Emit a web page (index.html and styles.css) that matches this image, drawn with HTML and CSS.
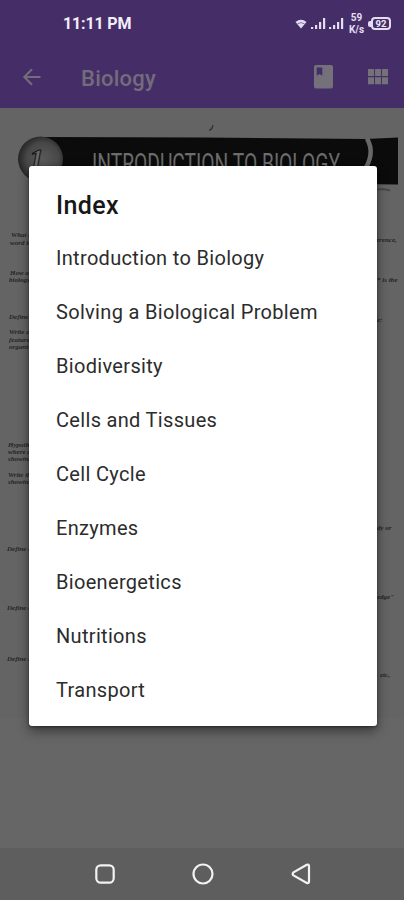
FILE: index.html
```html
<!DOCTYPE html>
<html lang="en">
<head>
<meta charset="utf-8">
<meta name="viewport" content="width=device-width, initial-scale=1">
<title>Biology</title>
<link rel="stylesheet" href="styles.css">
</head>
<body>
<div class="phone">
  <header class="top">
    <div class="status">
      <span class="time">11:11 PM</span>
      <div class="indicators">
        <svg class="wifi" width="12" height="10" viewBox="0 0 12 10"><path d="M.5 3Q6-1.400 11.500 3L6 9.500Z" fill="#e6dcf2"/><path d="M2.500 4.800Q6 2.400 9.500 4.800" fill="none" stroke="#6d5890" stroke-width=".8"/></svg>
        <svg class="signal" width="15" height="12" viewBox="0 0 15 12"><path d="M0 9h2.200v2H0zM4 7h2.200v4H4zM8 4h2.200v7H8zM12 0h2.200v11H12z" fill="#e6dcf2"/></svg>
        <svg class="signal" width="15" height="12" viewBox="0 0 15 12"><path d="M0 9h2.200v2H0zM4 7h2.200v4H4zM8 4h2.200v7H8zM12 0h2.200v11H12z" fill="#e6dcf2"/></svg>
        <span class="speed"><span>59</span><span>K/s</span></span>
        <span class="battery"><span class="level">92</span></span>
      </div>
    </div>
    <div class="appbar">
      <svg class="back" width="20" height="18" viewBox="0 0 20 18"><path d="M18.500 9H2.500M10 1.300 2.300 9l7.700 7.700" fill="none" stroke="#736c7a" stroke-width="2.100"/></svg>
      <h1>Biology</h1>
      <svg class="book" width="20" height="24" viewBox="0 0 20 24"><path fill-rule="evenodd" d="M2 0h15a2 2 0 0 1 2 2v19.500a2 2 0 0 1-2 2H2a2 2 0 0 1-2-2V2a2 2 0 0 1 2-2zM2.700 2.500v8.200l2.800-1.800 2.800 1.800V2.500z" fill="#74717a"/></svg>
      <svg class="grid" width="20" height="16" viewBox="0 0 20 16"><path d="M0 0h6v7H0zM7 0h6v7H7zM14 0h6v7h-6zM0 8.200h6v7H0zM7 8.200h6v7H7zM14 8.200h6v7h-6z" fill="#74717a"/></svg>
    </div>
  </header>
  <main class="viewer">
    <svg class="scan" width="404" height="610" viewBox="0 108 404 610">
      <defs>
        <radialGradient id="ball" cx=".55" cy=".5" r=".55"><stop offset="0" stop-color="#5a5a5a"/><stop offset=".65" stop-color="#474747"/><stop offset="1" stop-color="#252525"/></radialGradient>
      </defs>
      <rect y="108" width="404" height="610" fill="#646464"/>
      <path d="M209 130q3 0 4-5" fill="none" stroke="#333" stroke-width="1.300"/>
      <path d="M40 137 202 137.500 366 139 398 137.500 398 184.500 40 180Z" fill="#0b0b0b"/>
      <path d="M367 138.500Q376 154 363 172" fill="none" stroke="#686868" stroke-width="4.500"/>
      <circle cx="40.500" cy="159" r="22.500" fill="url(#ball)"/>
      <text class="numeral" x="29" y="169">1</text>
      <text class="banner" x="92" y="173" textLength="248" lengthAdjust="spacingAndGlyphs">INTRODUCTION TO BIOLOGY</text>
      <path d="M377 189.500q7-1 13 1" fill="none" stroke="#484848" stroke-width="2"/>
      <g class="print">
        <text x="11" y="237">What is</text><text x="10" y="245">word is</text>
        <text x="10" y="275">How any</text><text x="9" y="282">biology</text>
        <text x="9" y="319">Define b</text><text x="9" y="334">Write all</text><text x="9" y="342">features</text><text x="9" y="349">organis</text>
        <text x="8" y="447">Hypothe</text><text x="8" y="454">where a</text><text x="8" y="461">showing</text>
        <text x="8" y="477">Write the</text><text x="8" y="484">showing</text>
        <text x="7" y="551">Define a</text><text x="7" y="610">Define a</text><text x="7" y="661">Define a</text>
        <text x="376" y="242">erence,</text><text x="377" y="282">* is the</text><text x="377" y="322">e:</text>
        <text x="377" y="530">dy or</text><text x="377" y="599">edge"</text><text x="380" y="677">etc,</text>
      </g>
    </svg>
  </main>
  <nav class="navbar">
    <svg width="20" height="20" viewBox="0 0 20 20"><rect x="1.300" y="1.300" width="17.400" height="17.400" rx="4.500"/></svg>
    <svg width="22" height="22" viewBox="0 0 22 22"><circle cx="11" cy="11" r="9.500"/></svg>
    <svg width="20" height="22" viewBox="0 0 20 22"><path d="M15.800 1.800 2.500 9.400Q.8 11 2.500 12.400L15.800 19.900Q18 20.600 18 18.500V3.200Q18 1.100 15.800 1.800Z"/></svg>
  </nav>
  <section class="dialog">
    <h2>Index</h2>
    <ul>
      <li><span>Introduction to Biology</span></li>
      <li><span>Solving a Biological Problem</span></li>
      <li><span>Biodiversity</span></li>
      <li><span>Cells and Tissues</span></li>
      <li><span>Cell Cycle</span></li>
      <li><span>Enzymes</span></li>
      <li><span>Bioenergetics</span></li>
      <li><span>Nutritions</span></li>
      <li><span>Transport</span></li>
    </ul>
  </section>
</div>
</body>
</html>
```
FILE: styles.css
```css
* { box-sizing: border-box; }
body { margin: 0; font-family: Roboto, sans-serif; }
svg { display: block; flex: none; }
.phone {
  position: relative;
  display: flex;
  flex-direction: column;
  width: 404px;
  height: 900px;
  overflow: hidden;
  background: #666;
}
.top { height: 108px; background: #452e68; flex: none; }
.status {
  display: flex;
  justify-content: space-between;
  align-items: center;
  height: 46px;
  padding: 1px 13px 0 63px;
}
.time { color: #f4edfa; font-size: 16px; font-weight: 700; letter-spacing: -.15px; }
.indicators { display: flex; align-items: center; }
.wifi { margin-right: 1px; }
.signal { margin-left: 3px; }
.speed {
  display: flex;
  flex-direction: column;
  align-items: center;
  width: 17px;
  margin: 0 3px 0 4px;
  color: #e6dcf2;
  font-size: 10px;
  line-height: 12px;
  font-weight: 700;
}
.battery { display: flex; align-items: center; }
.battery::before { content: ""; width: 3px; height: 6px; background: #e6dcf2; border-radius: 2px 0 0 2px; }
.level {
  width: 20px;
  height: 13px;
  border: 2px solid #e6dcf2;
  border-radius: 4px;
  color: #f0e8f8;
  font-size: 9.5px;
  line-height: 9px;
  font-weight: 700;
  text-align: center;
}
.appbar { display: flex; align-items: center; height: 62px; padding: 0 16px 0 22px; }
.appbar h1 {
  flex: 1;
  margin: 3px 0 0 39px;
  color: #736c7a;
  font-size: 22px;
  font-weight: 500;
  letter-spacing: .25px;
}
.grid { margin-left: 34px; }
.viewer { flex: 1; }
.numeral { font: italic 700 30px "Liberation Serif", serif; fill: #686868; stroke: #151515; stroke-width: 1px; }
.banner { font: 400 28px Roboto, sans-serif; fill: #6c6c6c; }
.print { font: italic 700 7px "Liberation Serif", serif; fill: #252525; }
.navbar {
  display: flex;
  justify-content: space-between;
  align-items: center;
  height: 52px;
  padding: 0 93px 0 95px;
  background: #5e5e5e;
}
.navbar svg { fill: none; stroke: #f2f2f2; stroke-width: 2.2; }
.dialog {
  position: absolute;
  left: 29px;
  top: 166px;
  width: 348px;
  height: 560px;
  padding: 24px 27px 0;
  background: #fff;
  border-radius: 3px;
  box-shadow: 0 5px 12px rgba(0, 0, 0, .45), 0 1px 3px rgba(0, 0, 0, .4);
}
.dialog h2 { margin: 0; color: #171717; font-size: 25px; line-height: 32px; font-weight: 500; letter-spacing: .4px; }
.dialog ul { margin: 9px 0 0; padding: 0; list-style: none; }
.dialog li { display: flex; align-items: center; height: 54px; color: #2c2c2c; font-size: 20px; white-space: nowrap; letter-spacing: .32px; }
```
